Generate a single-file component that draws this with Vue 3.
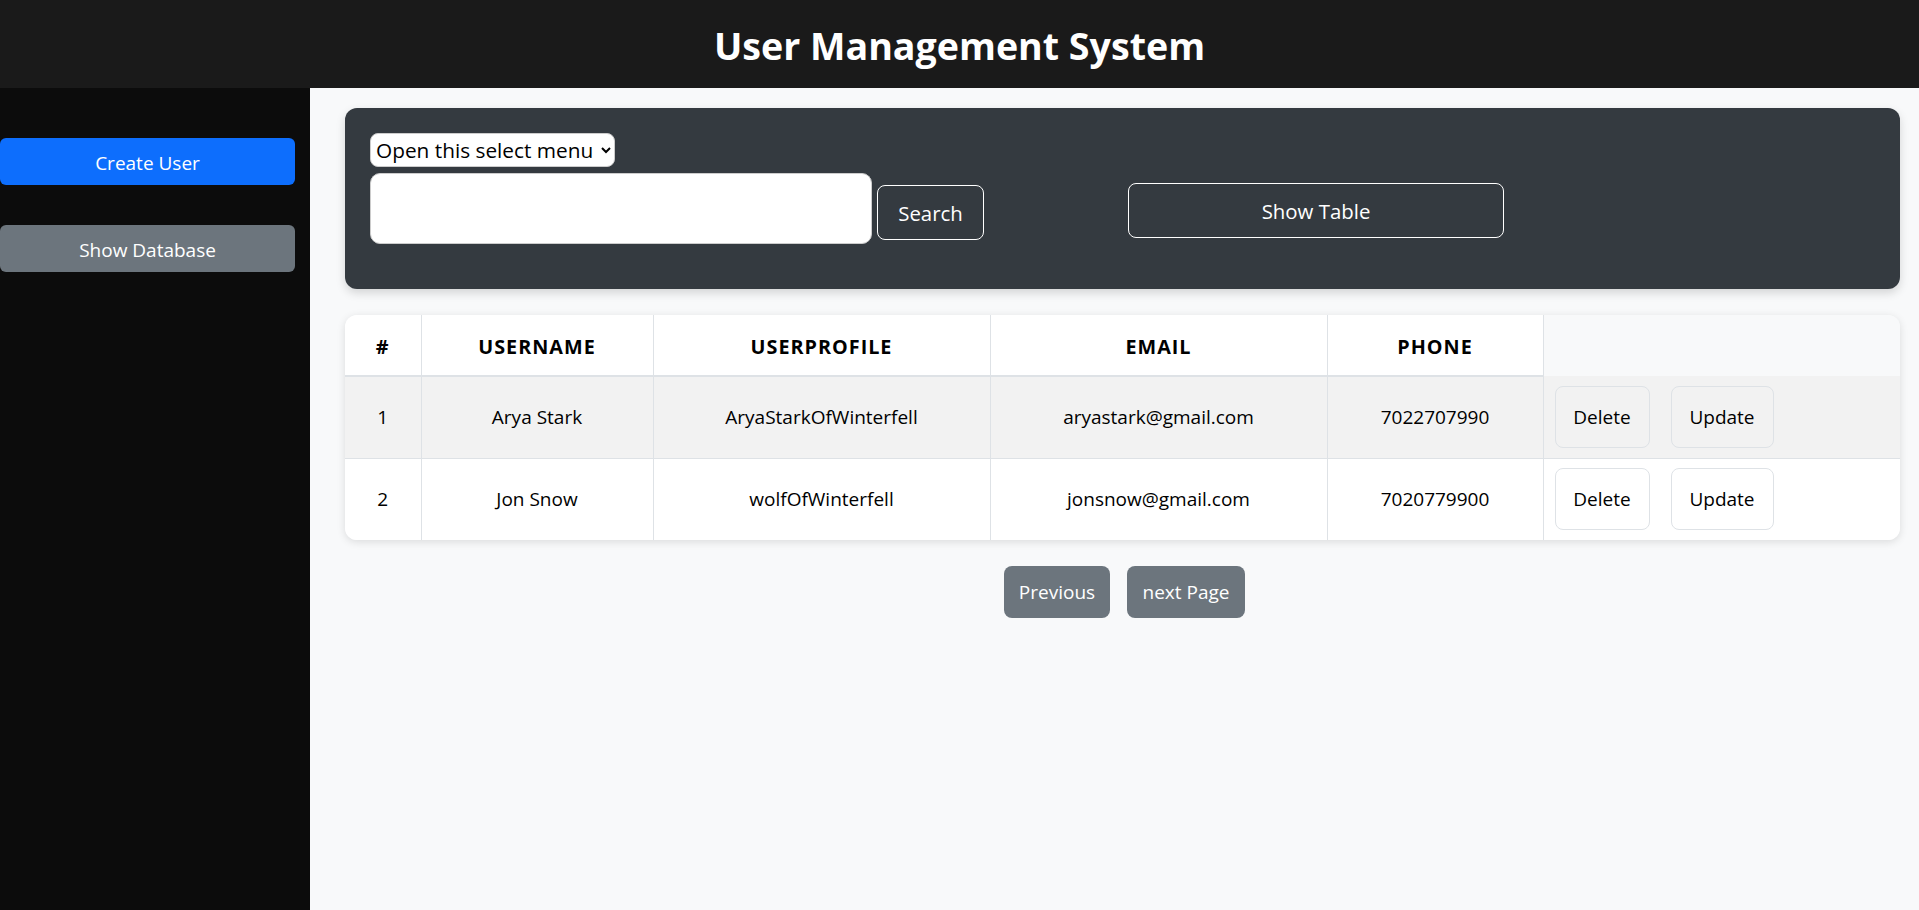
<template>
  <div class="page">
    <header class="topbar">
      <h1>User Management System</h1>
    </header>
    <div class="layout">
      <aside class="sidebar">
        <button class="side-btn primary">Create User</button>
        <button class="side-btn secondary">Show Database</button>
      </aside>
      <main class="content">
        <section class="panel">
          <select class="menu">
            <option>Open this select menu</option>
          </select>
          <div class="panel-row">
            <input class="search-input" type="text" />
            <button class="outline search-btn">Search</button>
            <button class="outline table-btn">Show Table</button>
          </div>
        </section>

        <div class="table-wrap">
          <table>
            <colgroup>
              <col style="width: 76px" />
              <col style="width: 232px" />
              <col style="width: 337px" />
              <col style="width: 337px" />
              <col style="width: 216px" />
              <col />
            </colgroup>
            <thead>
              <tr>
                <th>#</th>
                <th>USERNAME</th>
                <th>USERPROFILE</th>
                <th>EMAIL</th>
                <th>PHONE</th>
                <th class="blank"></th>
              </tr>
            </thead>
            <tbody>
              <tr v-for="(u, i) in users" :key="u.phone">
                <td>{{ i + 1 }}</td>
                <td>{{ u.name }}</td>
                <td>{{ u.profile }}</td>
                <td>{{ u.email }}</td>
                <td>{{ u.phone }}</td>
                <td class="actions">
                  <button class="row-btn">Delete</button>
                  <button class="row-btn">Update</button>
                </td>
              </tr>
            </tbody>
          </table>
        </div>

        <div class="pager">
          <button class="page-btn">Previous</button>
          <button class="page-btn">next Page</button>
        </div>
      </main>
    </div>
  </div>
</template>

<script setup>
const users = [
  { name: 'Arya Stark', profile: 'AryaStarkOfWinterfell', email: 'aryastark@gmail.com', phone: '7022707990' },
  { name: 'Jon Snow', profile: 'wolfOfWinterfell', email: 'jonsnow@gmail.com', phone: '7020779900' }
]
</script>

<style>
html,
body {
  margin: 0;
  background: #f8f9fa;
}
</style>

<style scoped>
.page {
  height: 910px;
  display: flex;
  flex-direction: column;
  font-family: "Open Sans", Roboto, sans-serif;
  font-size: 19px;
  color: #000;
}

.topbar {
  height: 88px;
  box-sizing: border-box;
  padding-top: 2px;
  flex: none;
  background: #1a1a1a;
  display: flex;
  align-items: center;
  justify-content: center;
}

.topbar h1 {
  margin: 0;
  font-size: 37.6px;
  font-weight: 700;
  color: #fff;
}

.layout {
  flex: 1;
  display: flex;
  min-height: 0;
}

.sidebar {
  width: 310px;
  flex: none;
  background: #0c0c0c;
  padding-top: 50px;
  box-sizing: border-box;
}

.side-btn {
  display: block;
  width: 295px;
  height: 47px;
  margin-bottom: 40px;
  padding: 2px 0 0;
  border: none;
  border-radius: 6px;
  color: #fff;
  font: inherit;
}

.primary {
  background: #0d6efd;
}

.secondary {
  background: #6c757d;
}

.content {
  flex: 1;
  min-width: 0;
  padding: 20px 19px 0 35px;
  background: #f8f9fa;
}

.panel {
  height: 181px;
  box-sizing: border-box;
  padding: 25px 25px 0;
  background: #343a40;
  border-radius: 12px;
  box-shadow: 0 4px 10px rgba(0, 0, 0, 0.15);
}

.menu {
  display: block;
  width: 245px;
  height: 34px;
  padding: 0 0 0 1px;
  border: 1px solid #ccc;
  border-radius: 8px;
  background: #fff;
  font: inherit;
  font-size: 20.8px;
}

.panel-row {
  display: flex;
  align-items: flex-start;
  margin-top: 6px;
}

.search-input {
  width: 502px;
  height: 71px;
  box-sizing: border-box;
  border: 1px solid #ccc;
  border-radius: 10px;
  background: #fff;
}

.outline {
  border: 1px solid #fff;
  border-radius: 8px;
  background: transparent;
  color: #fff;
  font: inherit;
  font-size: 20.4px;
  height: 55px;
}

.search-btn {
  width: 107px;
  margin: 12px 0 0 5px;
}

.table-btn {
  width: 376px;
  margin: 10px 0 0 144px;
}

.table-wrap {
  margin-top: 26px;
  border-radius: 12px;
  overflow: hidden;
  box-shadow: 0 2px 8px rgba(0, 0, 0, 0.12);
}

table {
  width: 100%;
  table-layout: fixed;
  border-collapse: collapse;
}

th,
td {
  padding: 0;
  text-align: center;
  border-right: 1px solid #dee2e6;
  background: #fff;
}

th {
  height: 61px;
  padding-top: 2px;
  box-sizing: border-box;
  font-size: 19.8px;
  font-weight: 700;
  letter-spacing: 1px;
  border-bottom: 2px solid #dee2e6;
}

td {
  height: 82px;
  box-sizing: border-box;
  border-bottom: 1px solid #dee2e6;
}

tbody tr:nth-child(odd) td {
  background: #f2f2f2;
}

tbody tr:last-child td {
  border-bottom: none;
}

th.blank {
  background: #f8f9fa;
  border-right: none;
  border-bottom: none;
}

td.actions {
  text-align: left;
  padding-left: 11px;
  border-right: none;
}

.row-btn {
  height: 62px;
  padding: 0;
  width: 95px;
  margin-right: 21px;
  border: 1px solid #dee2e6;
  border-radius: 8px;
  background: transparent;
  color: #000;
  font: inherit;
  vertical-align: middle;
}

.row-btn + .row-btn {
  width: 103px;
}

.pager {
  display: flex;
  justify-content: center;
  gap: 17px;
  margin-top: 26px;
  padding-left: 4px;
}

.page-btn {
  height: 52px;
  width: 106px;
  padding: 0;
  border: none;
  border-radius: 8px;
  background: #6c757d;
  color: #fff;
  font: inherit;
}

.page-btn + .page-btn {
  width: 118px;
}
</style>
